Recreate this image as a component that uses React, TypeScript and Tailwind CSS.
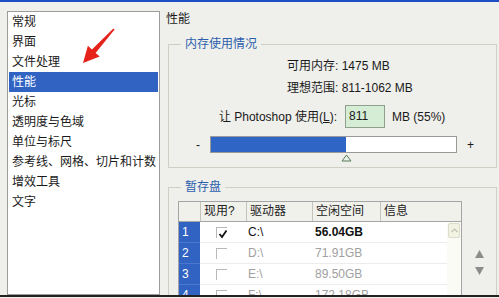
const menu = [
  "常规",
  "界面",
  "文件处理",
  "性能",
  "光标",
  "透明度与色域",
  "单位与标尺",
  "参考线、网格、切片和计数",
  "增效工具",
  "文字",
];

const disks = [
  { n: "1", on: true, drive: "C:\\", free: "56.04GB" },
  { n: "2", on: false, drive: "D:\\", free: "71.91GB" },
  { n: "3", on: false, drive: "E:\\", free: "89.50GB" },
  { n: "4", on: false, drive: "F:\\", free: "172.18GB" },
];

export default function App() {
  return (
    <div className="relative w-[499px] h-[298px] overflow-hidden bg-[#efefeb] font-['Liberation_Sans','Noto_Sans_CJK_SC',sans-serif] text-[12px] text-[#1a1a1a]">
      <div className="h-[2px] bg-[#1f4fc6]" />

      <div className="flex h-[293px] overflow-hidden">
        {/* Category list */}
        <div className="ml-[7px] mt-[9px] w-[153px] h-[284px] shrink-0 border border-[#9c9c9c] bg-white px-px">
          {menu.map((m) => (
            <div
              key={m}
              className={`h-5 leading-5 pl-[3px] whitespace-nowrap ${
                m === "性能" ? "bg-[#3163c3] text-white" : "text-[#1a1a1a]"
              }`}
            >
              {m}
            </div>
          ))}
        </div>

        {/* Settings panel */}
        <div className="flex-1 pl-[6px]">
          <div className="mt-[9px] leading-4">性能</div>

          {/* Memory usage */}
          <fieldset className="mt-[9px] ml-[2px] w-[329px] border border-[#cfcfc6] pt-[6px] pb-[14px]">
            <legend className="ml-[12px] px-[4px] leading-4 text-[#2d5fae]">内存使用情况</legend>
            <div className="pl-[118px] leading-4">可用内存: 1475 MB</div>
            <div className="mt-[6px] pl-[118px] leading-4">理想范围: 811-1062 MB</div>
            <div className="mt-[9px] flex items-center h-[23px] pl-[38px]">
              <span className="w-[130px] text-right whitespace-nowrap">让 Photoshop 使用(<span className="underline">L</span>):</span>
              <div className="ml-[8px] w-[40px] h-[23px] border border-[#8fa08f] bg-[#d5ecd5] pl-[3px] leading-[21px]">811</div>
              <span className="ml-[7px]">MB (55%)</span>
            </div>
            <div className="mt-[8px] flex items-center pl-[26px]">
              <span className="w-[15px] pl-[1px] leading-4">-</span>
              <div className="relative w-[247px] h-[17px] border border-[#9a9a9a] bg-white">
                <div className="w-[135px] h-full bg-[#2f66c6]" />
                <svg className="absolute left-[130px] top-[17px]" width="11" height="8" viewBox="0 0 11 8">
                  <path d="M5.5 1 L10 7 L1 7 Z" fill="#e8f4e8" stroke="#5a7a5a" strokeWidth="1" />
                </svg>
              </div>
              <span className="ml-[10px] leading-4">+</span>
            </div>
          </fieldset>

          {/* Scratch disks */}
          <fieldset className="mt-[11px] ml-[2px] w-[329px] h-[200px] border border-[#cfcfc6] pt-[6px] pl-[9px]">
            <legend className="ml-[3px] px-[4px] leading-4 text-[#2d5fae]">暂存盘</legend>
            <div className="flex">
              <div className="w-[284px] border-x border-[#a5a5a5]">
                <div className="flex h-[21px] border-y border-[#a5a5a5] bg-[#f1f1ec] leading-[19px] text-[#222]">
                  <div className="w-[21px]" />
                  <div className="w-[46px] border-l border-[#c4c4bc] pl-[3px]">现用?</div>
                  <div className="w-[66px] border-l border-[#c4c4bc] pl-[3px]">驱动器</div>
                  <div className="w-[68px] border-l border-[#c4c4bc] pl-[3px]">空闲空间</div>
                  <div className="w-[81px] border-l border-[#c4c4bc] pl-[3px]">信息</div>
                </div>
                <div className="flex">
                  <div className="w-[268px]">
                    {disks.map((d) => (
                      <div key={d.n} className="flex h-[21px] leading-[20px]">
                        <div className="w-[21px] bg-[#3163c3] text-white pl-[3px] border-b border-[#4a78cc]">{d.n}</div>
                        <div className={`flex flex-1 bg-white border-b border-[#ececec] ${d.on ? "text-[#111]" : "text-[#a0a0a0]"}`}>
                          <div className="w-[46px] flex items-center pl-[16px]">
                            <div className="relative w-[11px] h-[11px] border-t border-l border-[#b8b8b8]">
                              {d.on && (
                                <svg className="absolute left-[1px] top-[1px]" width="10" height="10" viewBox="0 0 10 10">
                                  <path d="M1.5 5 L4 8 L8.5 1.5" fill="none" stroke="#111" strokeWidth="1.8" />
                                </svg>
                              )}
                            </div>
                          </div>
                          <div className="w-[66px] pl-[2px]">{d.drive}</div>
                          <div className={`w-[68px] pl-[3px] ${d.on ? "font-semibold" : ""}`}>{d.free}</div>
                          <div className="flex-1" />
                        </div>
                      </div>
                    ))}
                  </div>
                  <div className="w-[14px] bg-[#fbfbf5]">
                    <div className="m-px h-[15px] rounded-[2px] border border-[#dcdccb] bg-[#f3f3e4] flex items-center justify-center">
                      <svg width="7" height="5" viewBox="0 0 7 5">
                        <path d="M0.5 4 L3.5 1 L6.5 4" fill="none" stroke="#c2c2b2" strokeWidth="1.2" />
                      </svg>
                    </div>
                  </div>
                </div>
              </div>
              <div className="w-[34px] flex flex-col items-center pt-[49px] gap-[9px]">
                <svg width="9" height="8" viewBox="0 0 9 8">
                  <path d="M4.5 0 L9 8 L0 8 Z" fill="#8c8c8c" />
                </svg>
                <svg width="9" height="8" viewBox="0 0 9 8">
                  <path d="M0 0 L9 0 L4.5 8 Z" fill="#8c8c8c" />
                </svg>
              </div>
            </div>
          </fieldset>
        </div>
      </div>

      <div className="h-[2px] bg-[#222]" />

      {/* red annotation arrow */}
      <svg className="absolute left-0 top-0 pointer-events-none" width="499" height="298" viewBox="0 0 499 298">
        <polygon
          points="113.4,28.5 91.9,49.5 87.9,45.8 83,63 99.7,56.6 95.6,52.9 114.6,29.5"
          fill="#e5231b"
        />
      </svg>
    </div>
  );
}
